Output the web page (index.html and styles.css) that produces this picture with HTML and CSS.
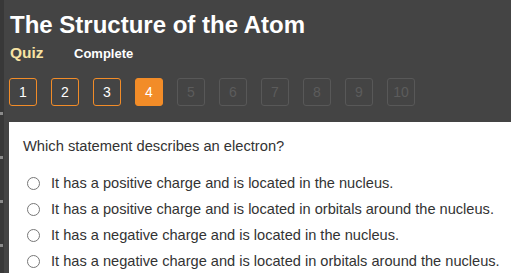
FILE: index.html
```html
<!DOCTYPE html>
<html>
<head>
<meta charset="utf-8">
<link rel="stylesheet" href="styles.css">
</head>
<body>
<div class="page">
  <div class="rail"><span></span><span></span><span></span><span></span></div>
  <div class="main">
    <header class="head">
      <h1 class="title">The Structure of the Atom</h1>
      <div class="sub">
        <span class="quiz">Quiz</span>
        <span class="status">Complete</span>
      </div>
      <nav class="steps">
        <span class="step done">1</span>
        <span class="step done">2</span>
        <span class="step done">3</span>
        <span class="step current">4</span>
        <span class="step off">5</span>
        <span class="step off">6</span>
        <span class="step off">7</span>
        <span class="step off">8</span>
        <span class="step off">9</span>
        <span class="step off">10</span>
      </nav>
    </header>
    <section class="card">
      <p class="question">Which statement describes an electron?</p>
      <ul class="options">
        <li><span class="radio"></span>It has a positive charge and is located in the nucleus.</li>
        <li><span class="radio"></span>It has a positive charge and is located in orbitals around the nucleus.</li>
        <li><span class="radio"></span>It has a negative charge and is located in the nucleus.</li>
        <li><span class="radio"></span>It has a negative charge and is located in orbitals around the nucleus.</li>
      </ul>
    </section>
  </div>
</div>
</body>
</html>
```
FILE: styles.css
```css
html, body {
  margin: 0;
  padding: 0;
  background: #444444;
  overflow: hidden;
}
body {
  width: 511px;
  height: 273px;
  font-family: "Liberation Sans", Arial, sans-serif;
}
.page {
  display: flex;
  height: 273px;
}
.rail {
  width: 4px;
  background: #383838;
  display: flex;
  flex-direction: column;
  padding-top: 112px;
  gap: 41px;
}
.rail span {
  display: block;
  width: 3px;
  height: 3px;
  background: #8a8a8a;
}
.main {
  flex: 1;
  display: flex;
  flex-direction: column;
  padding-left: 5px;
}
.head {
  padding: 11px 0 0 1px;
}
.title {
  margin: 0;
  font-size: 24px;
  line-height: 28px;
  font-weight: bold;
  color: #ffffff;
}
.sub {
  display: flex;
  align-items: baseline;
  margin-top: 5px;
  height: 18px;
}
.quiz {
  font-size: 15.5px;
  font-weight: bold;
  color: #f7e3a3;
  width: 64px;
}
.status {
  font-size: 13px;
  font-weight: bold;
  color: #ffffff;
}
.steps {
  display: flex;
  gap: 14px;
  margin-top: 16px;
  margin-left: -1px;
}
.step {
  box-sizing: border-box;
  width: 28px;
  height: 28px;
  border: 1px solid #f28c28;
  border-radius: 3px;
  display: flex;
  align-items: center;
  justify-content: center;
  font-size: 14px;
  color: #ffffff;
}
.step.current {
  background: #f28c28;
}
.step.off {
  border-color: #585858;
  color: #5c5c5c;
}
.card {
  margin-top: 16px;
  flex: 1;
  background: #ffffff;
  padding: 15px 0 0 14px;
}
.question {
  margin: 0;
  font-size: 14.7px;
  color: #333333;
  line-height: 18px;
}
.options {
  list-style: none;
  margin: 15px 0 0 0;
  padding: 0 0 0 4px;
}
.options li {
  display: flex;
  align-items: center;
  height: 26px;
  font-size: 14.6px;
  color: #333333;
}
.radio {
  box-sizing: border-box;
  width: 13px;
  height: 13px;
  border: 1px solid #777777;
  border-radius: 50%;
  margin-right: 11px;
  flex: none;
}
```
